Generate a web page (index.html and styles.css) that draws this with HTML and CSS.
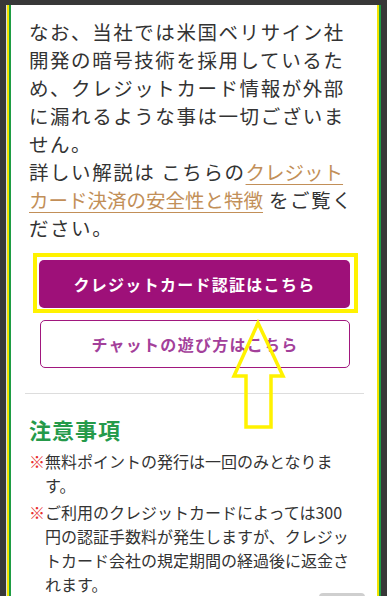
FILE: index.html
```html
<!DOCTYPE html>
<html lang="ja">
<head>
<meta charset="utf-8">
<title>クレジットカード認証</title>
<link rel="stylesheet" href="styles.css">
</head>
<body>
<div class="frame">
  <div class="frame-y">
    <div class="frame-g">
      <main class="content">
        <p class="lead">なお、当社では米国ベリサイン社開発の暗号技術を採用しているため、クレジットカード情報が外部に漏れるような事は一切ございません。<br>詳しい解説は こちらの<a class="link" href="#">クレジットカード決済の安全性と特徴</a> をご覧ください。</p>
        <div class="btn-wrap">
          <a class="btn btn-primary" href="#">クレジットカード認証はこちら</a>
          <span class="highlight"></span>
        </div>
        <a class="btn btn-outline" href="#">チャットの遊び方はこちら</a>
        <hr class="divider">
        <h2 class="notice-title">注意事項</h2>
        <ul class="notice-list">
          <li><span class="mark">※</span>無料ポイントの発行は一回のみとなります。</li>
          <li><span class="mark">※</span>ご利用のクレジットカードによっては300円の認証手数料が発生しますが、クレジットカード会社の規定期間の経過後に返金されます。</li>
        </ul>
        <svg class="arrow" width="60" height="115" viewBox="0 0 60 115">
          <polygon points="28,5 53,58 41,58 41,109 16,109 16,58 4,58" fill="none" stroke="#fff200" stroke-width="3.5" stroke-linejoin="miter"/>
        </svg>
      </main>
    </div>
  </div>
</div>
<div class="pagetop"></div>
</body>
</html>
```
FILE: styles.css
```css
html, body {
  margin: 0;
  padding: 0;
  overflow: hidden;
}
body {
  background: #383838;
  font-family: "Noto Sans CJK JP", "Noto Sans", sans-serif;
  color: #333;
}
.frame {
  margin: 5px 6px 0 6px;
  border-left: 1px solid #dcdcdc;
}
.frame-y {
  border-left: 2px solid #f2e400;
  border-right: 2px solid #1e9c44;
}
.frame-g {
  border-left: 2px solid #1e9c44;
  border-right: 2px solid #f2e400;
  background: #fff;
}
.content {
  position: relative;
  padding: 13px 18px 40px 18px;
}
.lead {
  margin: 0;
  font-size: 19.5px;
  line-height: 28px;
  letter-spacing: 0.08em;
}
.link {
  color: #c28f58;
  text-decoration: underline;
  text-underline-offset: 4px;
  text-decoration-thickness: 1px;
  letter-spacing: 0;
}
.btn-wrap {
  position: relative;
  margin: 18px 9px 0 10px;
}
.btn {
  display: flex;
  align-items: center;
  justify-content: center;
  box-sizing: border-box;
  height: 48px;
  border-radius: 5px;
  font-size: 16px;
  font-weight: 700;
  letter-spacing: 0.08em;
  text-decoration: none;
}
.btn-primary {
  background: #9e1079;
  color: #fff;
}
.highlight {
  position: absolute;
  top: -7px;
  left: -6px;
  right: -8px;
  bottom: -5px;
  border: 4px solid #fff200;
  pointer-events: none;
}
.btn-outline {
  margin: 12px 9px 0 11px;
  border: 1px solid #a1177e;
  background: #fff;
  color: #a3409a;
}
.divider {
  margin: 25px -5px 0 -4px;
  border: 0;
  border-top: 1px solid #dddddd;
}
.notice-title {
  margin: 20px 0 0 0;
  font-size: 22px;
  line-height: 30px;
  font-weight: 700;
  letter-spacing: 1px;
  color: #259a4a;
}
.notice-list {
  list-style: none;
  margin: 5px 3px 0 0;
  padding: 0;
  font-size: 16px;
  line-height: 24px;
}
.notice-list li {
  padding-left: 16px;
  text-indent: -16px;
}
.notice-list li + li {
  margin-top: 3px;
}
.mark {
  color: #e8322f;
}
.arrow {
  position: absolute;
  left: 219px;
  top: 313px;
}
.pagetop {
  position: fixed;
  right: 22px;
  bottom: -8px;
  width: 46px;
  height: 11px;
  background: #cfcfcf;
  border-radius: 4px;
}
```
